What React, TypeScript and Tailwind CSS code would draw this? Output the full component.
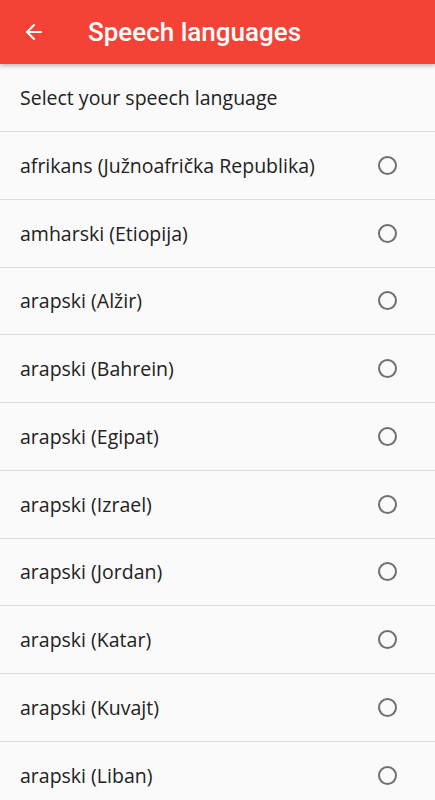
import { ArrowLeft } from "lucide-react";

const languages = [
  "afrikans (Južnoafrička Republika)",
  "amharski (Etiopija)",
  "arapski (Alžir)",
  "arapski (Bahrein)",
  "arapski (Egipat)",
  "arapski (Izrael)",
  "arapski (Jordan)",
  "arapski (Katar)",
  "arapski (Kuvajt)",
  "arapski (Liban)",
];

export default function App() {
  return (
    <div className="h-[800px] w-full overflow-hidden bg-[#fafafa] font-['Roboto',sans-serif]">
      {/* App bar */}
      <header className="relative z-10 flex h-16 items-center bg-[#f44336] text-white shadow-[0_2px_4px_rgba(0,0,0,0.25)]">
        <button className="ml-[22px] flex h-6 w-6 items-center justify-center" aria-label="Back">
          <ArrowLeft size={24} strokeWidth={2} />
        </button>
        <h1 className="ml-[42px] text-[26px] font-medium">Speech languages</h1>
      </header>

      <div className="flex h-[68px] items-center border-b border-[#dcdcdc] px-5 text-[19.5px] text-[#212121] font-['Open_Sans',sans-serif]">
        Select your speech language
      </div>

      <ul>
        {languages.map((lang) => (
          <li
            key={lang}
            className="flex h-[67.75px] items-center justify-between border-b border-[#dcdcdc] pl-5 pr-[38px] text-[19.5px] text-[#212121] font-['Open_Sans',sans-serif]"
          >
            <span>{lang}</span>
            <span className="h-[19px] w-[19px] rounded-full border-2 border-[#707070]" />
          </li>
        ))}
      </ul>
    </div>
  );
}
